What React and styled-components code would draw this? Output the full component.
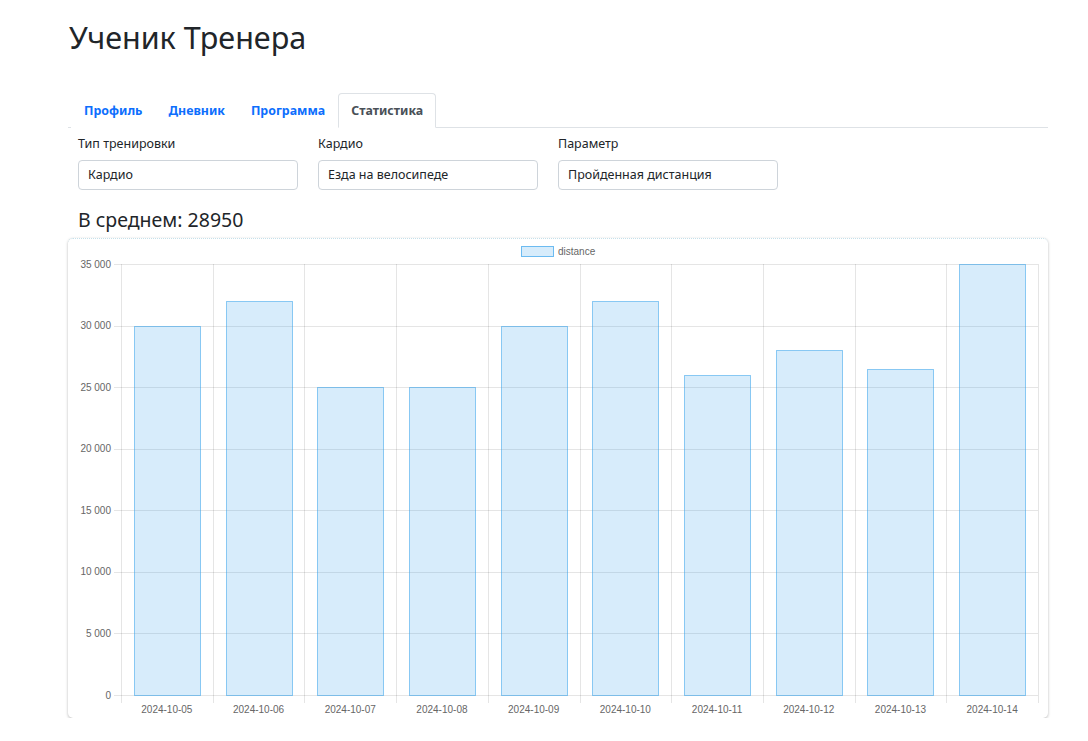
import React from "react";
import styled, { createGlobalStyle } from "styled-components";

const GlobalStyle = createGlobalStyle`
  body {
    margin: 0;
    background: #fff;
    font-family: "Noto Sans", "Open Sans", sans-serif;
    color: #212529;
  }
`;

const data = [
  { date: "2024-10-05", value: 30000 },
  { date: "2024-10-06", value: 32000 },
  { date: "2024-10-07", value: 25000 },
  { date: "2024-10-08", value: 25000 },
  { date: "2024-10-09", value: 30000 },
  { date: "2024-10-10", value: 32000 },
  { date: "2024-10-11", value: 26000 },
  { date: "2024-10-12", value: 28000 },
  { date: "2024-10-13", value: 26500 },
  { date: "2024-10-14", value: 35000 },
];

const Page = styled.div`
  width: 980px;
  margin-left: 68px;
  padding-top: 19px;
`;

const Title = styled.h1`
  margin: 0 0 0 1px;
  font-size: 30.5px;
  font-weight: 400;
  line-height: 1.2;
  color: #212529;
`;

const Tabs = styled.ul`
  display: flex;
  list-style: none;
  margin: 37px 0 0;
  padding: 0 0 0 3px;
  border-bottom: 1px solid #dee2e6;
`;

const Tab = styled.li`
  margin-bottom: -1px;
  padding: 7px 12px 6px;
  font-size: 12.4px;
  font-weight: 700;
  line-height: 20px;
  color: ${(p) => (p.$active ? "#495057" : "#0d6efd")};
  background: #fff;
  border: 1px solid ${(p) => (p.$active ? "#dee2e6" : "transparent")};
  border-bottom-color: ${(p) => (p.$active ? "#fff" : "transparent")};
  border-radius: 4px 4px 0 0;
`;

const Section = styled.div`
  padding: 0 10px;
`;

const FormRow = styled.div`
  display: flex;
  gap: 20px;
  margin-top: 7px;
`;

const Field = styled.div`
  display: flex;
  flex-direction: column;
  width: 220px;
`;

const Label = styled.label`
  font-size: 12.5px;
  line-height: 18px;
  margin-bottom: 7px;
`;

const Select = styled.div`
  height: 30px;
  box-sizing: border-box;
  border: 1px solid #ced4da;
  border-radius: 4px;
  padding: 0 9px;
  display: flex;
  align-items: center;
  font-size: 12.5px;
  color: #212529;
`;

const Average = styled.h4`
  margin: 16px 0 0;
  font-size: 19.5px;
  font-weight: 400;
  line-height: 28px;
`;

const Card = styled.div`
  margin-top: 4px;
  height: 480px;
  border-radius: 5px;
  border-top: 1px dotted #c5e0ea;
  box-sizing: border-box;
  box-shadow: 0 1px 3px rgba(0, 0, 0, 0.28);
  background: #fff;
  overflow: hidden;
`;

const ChartSvg = styled.svg`
  display: block;
  font-family: "Liberation Sans", Arial, sans-serif;
`;

function BarChart() {
  const left = 53;
  const right = 970;
  const top = 25;
  const bottom = 456;
  const max = 35000;
  const cat = (right - left) / data.length;
  const y = (v) => bottom - (v / max) * (bottom - top);
  const ticks = [0, 5000, 10000, 15000, 20000, 25000, 30000, 35000];
  const grid = "rgba(0,0,0,0.1)";
  const fmt = (v) => v.toLocaleString("ru-RU").replace(/\s/g, " ");

  return (
    <ChartSvg width="980" height="479" viewBox="0 0 980 479">
      <rect x="453.5" y="7.5" width="32" height="10" fill="rgba(54,162,235,0.2)" stroke="rgba(54,162,235,0.7)" />
      <text x="490" y="16" fontSize="10" fill="#666">distance</text>

      {ticks.map((t) => (
        <g key={t}>
          <line x1={left - 7} x2={right} y1={Math.round(y(t)) + 0.5} y2={Math.round(y(t)) + 0.5} stroke={grid} />
          <text x={left - 10} y={y(t) + 3.5} fontSize="10" fill="#666" textAnchor="end">
            {fmt(t)}
          </text>
        </g>
      ))}

      {data.map((d, i) => (
        <line
          key={"v" + i}
          x1={Math.round(left + i * cat) + 0.5}
          x2={Math.round(left + i * cat) + 0.5}
          y1={top}
          y2={bottom + 8}
          stroke={grid}
        />
      ))}
      <line x1={right + 0.5} x2={right + 0.5} y1={top} y2={bottom + 8} stroke={grid} />

      {data.map((d, i) => {
        const w = cat * 0.72;
        const x = left + i * cat + (cat - w) / 2;
        return (
          <g key={d.date}>
            <rect
              x={Math.round(x) + 0.5}
              y={Math.round(y(d.value)) + 0.5}
              width={Math.round(w)}
              height={Math.round(bottom - y(d.value))}
              fill="rgba(54,162,235,0.2)"
              stroke="rgba(54,162,235,0.55)"
            />
            <text x={left + i * cat + cat / 2} y={bottom + 18} fontSize="10" fill="#666" textAnchor="middle">
              {d.date}
            </text>
          </g>
        );
      })}
    </ChartSvg>
  );
}

export default function App() {
  return (
    <>
      <GlobalStyle />
      <Page>
        <Title>Ученик Тренера</Title>
        <Tabs>
          <Tab>Профиль</Tab>
          <Tab>Дневник</Tab>
          <Tab>Программа</Tab>
          <Tab $active>Статистика</Tab>
        </Tabs>
        <Section>
          <FormRow>
            <Field>
              <Label>Тип тренировки</Label>
              <Select>Кардио</Select>
            </Field>
            <Field>
              <Label>Кардио</Label>
              <Select>Езда на велосипеде</Select>
            </Field>
            <Field>
              <Label>Параметр</Label>
              <Select>Пройденная дистанция</Select>
            </Field>
          </FormRow>
          <Average>В среднем: 28950</Average>
        </Section>
        <Card>
          <BarChart />
        </Card>
      </Page>
    </>
  );
}
